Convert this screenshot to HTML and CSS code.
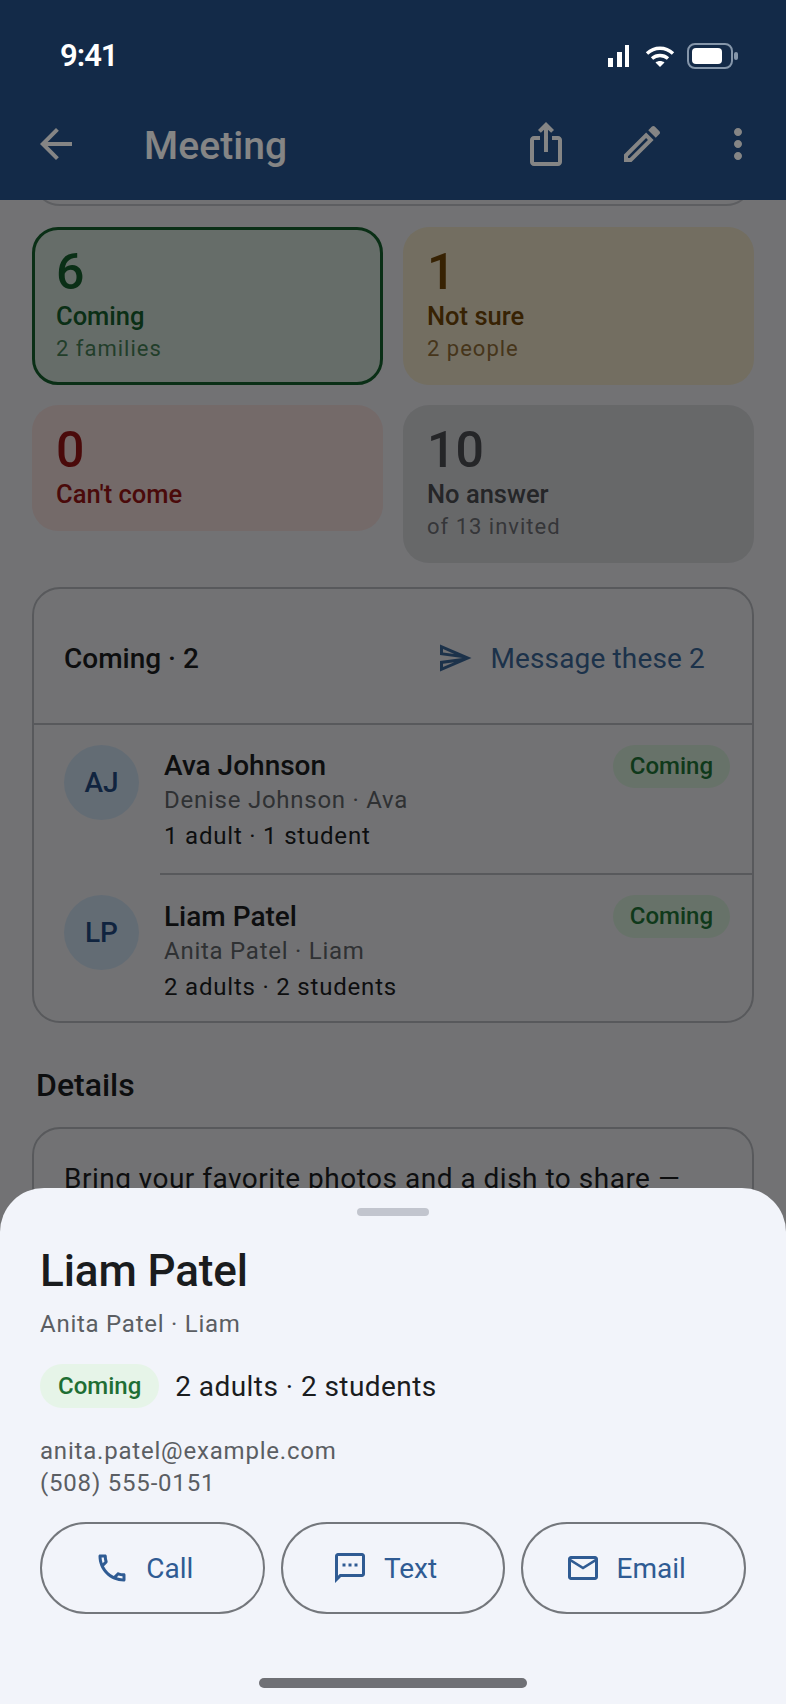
FILE: index.html
```html
<!DOCTYPE html>
<html lang="en">
<head>
  <meta charset="UTF-8">
  <title>Meeting</title>
  <link rel="stylesheet" href="styles.css">
</head>
<body>
  <div class="phone">
    <header class="top">
      <div class="status">
        <span class="time">9:41</span>
        <div class="status-icons">
          <svg class="signal" width="21" height="22" viewBox="0 0 21 22"><rect x="0" y="13" width="5" height="9" fill="#fff"/><rect x="9" y="7" width="5" height="15" fill="#fff"/><rect x="17" y="0" width="4" height="22" fill="#fff"/></svg>
          <svg width="30" height="22" viewBox="0 0 30 22" fill="none" stroke="#fff" stroke-width="3.4"><path d="M2 8.500C9.500 1.500 20.500 1.500 28 8.500"/><path d="M7 13.500C11.500 9.500 18.500 9.500 23 13.500"/><path d="M15 22l-4.500-4.500c2.500-2 6.500-2 9 0z" fill="#fff" stroke="none"/></svg>
          <svg width="51" height="26" viewBox="0 0 51 26"><rect x="1" y="1" width="44" height="24" rx="7" fill="none" stroke="#8596aa" stroke-width="2"/><rect x="5" y="5" width="30" height="16" rx="4" fill="#fff"/><rect x="47" y="9" width="4" height="8" rx="2" fill="#8596aa"/></svg>
        </div>
      </div>
      <div class="appbar">
        <svg class="icon back" viewBox="0 0 24 24"><path d="M20 11H7.830l5.590-5.590L12 4l-8 8 8 8 1.410-1.410L7.830 13H20v-2z"/></svg>
        <h1 class="title">Meeting</h1>
        <button class="action"><svg class="icon" viewBox="0 0 24 24"><path d="M16 5l-1.420 1.420-1.590-1.590V16h-1.980V4.830L9.420 6.420 8 5l4-4 4 4zm4 5v11c0 1.100-.9 2-2 2H6c-1.110 0-2-.9-2-2V10c0-1.110.89-2 2-2h3v2H6v11h12V10h-3V8h3c1.100 0 2 .89 2 2z"/></svg></button>
        <button class="action"><svg class="icon" viewBox="0 0 24 24"><path d="M14.060 9.020l.92.92L5.920 19H5v-.92l9.060-9.060M17.660 3c-.25 0-.51.1-.7.29l-1.830 1.830 3.750 3.750 1.830-1.830c.39-.39.39-1.020 0-1.410l-2.340-2.340c-.2-.2-.45-.29-.71-.29zm-3.600 3.190L3 17.250V21h3.750L17.810 9.940l-3.750-3.750z"/></svg></button>
        <button class="action"><svg class="icon" viewBox="0 0 24 24"><path d="M12 8c1.100 0 2-.9 2-2s-.9-2-2-2-2 .9-2 2 .9 2 2 2zm0 2c-1.100 0-2 .9-2 2s.9 2 2 2 2-.9 2-2-.9-2-2-2zm0 6c-1.100 0-2 .9-2 2s.9 2 2 2 2-.9 2-2-.9-2-2-2z"/></svg></button>
      </div>
    </header>

    <main class="content">
      <div class="prev-clip"><div class="prev-card"></div></div>

      <div class="tiles">
        <div class="tile tile-green selected">
          <div class="num">6</div>
          <div class="label">Coming</div>
          <div class="note">2 families</div>
        </div>
        <div class="tile tile-amber">
          <div class="num">1</div>
          <div class="label">Not sure</div>
          <div class="note">2 people</div>
        </div>
        <div class="tile tile-red">
          <div class="num">0</div>
          <div class="label">Can't come</div>
        </div>
        <div class="tile tile-grey">
          <div class="num">10</div>
          <div class="label">No answer</div>
          <div class="note">of 13 invited</div>
        </div>
      </div>

      <section class="panel">
        <div class="panel-head">
          <span class="panel-title">Coming · 2</span>
          <span class="msg">
            <svg class="msg-icon" viewBox="0 0 24 24"><path d="M4.010 6.030l7.510 3.220-7.520-1 .01-2.220m7.500 8.720L4 17.970v-2.220l7.510-1M2.010 3L2 10l15 2-15 2 .01 7L23 12 2.010 3z"/></svg>
            Message these 2
          </span>
        </div>
        <div class="person">
          <div class="avatar">AJ</div>
          <div class="person-text">
            <div class="name">Ava Johnson</div>
            <div class="sub">Denise Johnson · Ava</div>
            <div class="count">1 adult · 1 student</div>
          </div>
          <span class="chip">Coming</span>
        </div>
        <div class="person person-next">
          <div class="avatar">LP</div>
          <div class="person-text">
            <div class="name">Liam Patel</div>
            <div class="sub">Anita Patel · Liam</div>
            <div class="count">2 adults · 2 students</div>
          </div>
          <span class="chip">Coming</span>
        </div>
      </section>

      <h2 class="section-title">Details</h2>
      <section class="panel details">
        <p>Bring your favorite photos and a dish to share —</p>
      </section>
    </main>

    <div class="scrim"></div>

    <aside class="sheet">
      <div class="handle"></div>
      <h2 class="sheet-name">Liam Patel</h2>
      <div class="sheet-sub">Anita Patel · Liam</div>
      <div class="sheet-status">
        <span class="sheet-chip">Coming</span>
        <span class="sheet-count">2 adults · 2 students</span>
      </div>
      <div class="contact">
        <div>anita.patel@example.com</div>
        <div>(508) 555-0151</div>
      </div>
      <div class="buttons">
        <button class="pill"><svg viewBox="0 0 24 24"><path d="M6.540 5c.06.89.21 1.760.45 2.590l-1.200 1.200c-.41-1.200-.67-2.470-.76-3.790h1.510m9.860 12.020c.85.24 1.720.39 2.600.45v1.490c-1.320-.09-2.590-.35-3.800-.75l1.200-1.190M7.500 3H4c-.55 0-1 .45-1 1 0 9.390 7.610 17 17 17 .55 0 1-.45 1-1v-3.490c0-.55-.45-1-1-1-1.240 0-2.450-.2-3.570-.57-.1-.04-.21-.05-.31-.05-.26 0-.51.1-.71.29l-2.200 2.200c-2.830-1.450-5.150-3.760-6.590-6.590l2.200-2.200c.28-.28.36-.67.25-1.020C8.700 6.450 8.500 5.250 8.500 4c0-.55-.45-1-1-1z"/></svg>Call</button>
        <button class="pill"><svg viewBox="0 0 24 24"><path d="M20 2H4c-1.100 0-1.990.9-1.990 2L2 22l4-4h14c1.100 0 2-.9 2-2V4c0-1.100-.9-2-2-2zm0 14H5.170L4 17.170V4h16v12zM7 9h2v2H7zm4 0h2v2h-2zm4 0h2v2h-2z"/></svg>Text</button>
        <button class="pill"><svg viewBox="0 0 24 24"><path d="M20 4H4c-1.100 0-1.990.9-1.990 2L2 18c0 1.100.9 2 2 2h16c1.100 0 2-.9 2-2V6c0-1.100-.9-2-2-2zm0 14H4V8l8 5 8-5v10zm-8-7L4 6h16l-8 5z"/></svg>Email</button>
      </div>
      <div class="home-bar"></div>
    </aside>
  </div>
</body>
</html>
```

FILE: styles.css
```css
* {
  box-sizing: border-box;
}
body {
  margin: 0;
  font-family: Roboto, sans-serif;
  color: #1a1c1e;
}
h1, h2, p {
  margin: 0;
  font-weight: 500;
}
button {
  font-family: inherit;
  background: none;
  border: none;
  padding: 0;
}

.phone {
  position: relative;
  width: 786px;
  height: 1704px;
  overflow: hidden;
  background: #dadbdf;
}

/* top bar */
.top {
  height: 200px;
  background: #26528a;
}
.status {
  position: relative;
  z-index: 2;
  height: 110px;
  padding: 37px 48px 0 60px;
  display: flex;
  justify-content: space-between;
  align-items: flex-start;
}
.time {
  color: #fff;
  font-size: 31px;
  font-weight: 600;
  letter-spacing: -1px;
  line-height: 38px;
}
.status-icons {
  display: flex;
  align-items: center;
  gap: 12px;
  height: 38px;
}
.signal {
  margin-right: 4px;
}
.appbar {
  display: flex;
  align-items: center;
  height: 68px;
  padding: 0 0 0 32px;
}
.icon {
  width: 48px;
  height: 48px;
  fill: #fff;
  display: block;
}
.title {
  flex: 1;
  margin-left: 64px;
  padding-top: 4px;
  color: #fff;
  font-size: 39px;
  letter-spacing: 0.1px;
}
.action {
  width: 96px;
  height: 48px;
  display: flex;
  justify-content: center;
}

/* page under the sheet */
.content {
  padding: 0 32px;
}
.prev-clip {
  height: 6px;
  margin-bottom: 21px;
  overflow: hidden;
}
.prev-card {
  height: 60px;
  margin-top: -54px;
  border: 2px solid #b3b5ba;
  border-radius: 28px;
}
.tiles {
  display: grid;
  grid-template-columns: 1fr 1fr;
  gap: 20px;
  align-items: start;
}
.tile {
  padding: 20px 24px 20px;
  border-radius: 26px;
}
.tile-green {
  background: #c4d1c9;
  color: #155a2b;
}
.selected {
  border: 3px solid #155a2b;
  padding: 17px 21px 17px;
}
.tile-amber {
  background: #dcd3ba;
  color: #6a4206;
}
.tile-red {
  background: #dfcbca;
  color: #8f1414;
}
.tile-grey {
  background: #c6c7ca;
  color: #48494e;
}
.num {
  font-size: 50px;
  font-weight: 500;
  line-height: 50px;
}
.label {
  margin-top: 2px;
  font-size: 25.5px;
  font-weight: 500;
  line-height: 34px;
}
.note {
  font-size: 22px;
  letter-spacing: 1px;
  line-height: 32px;
  opacity: 0.75;
}

.panel {
  border: 2px solid #a9abb0;
  border-radius: 28px;
}
.tiles + .panel {
  margin-top: 24px;
  height: 436px;
}
.panel-head {
  height: 136px;
  padding: 4px 47px 0 30px;
  display: flex;
  align-items: center;
  justify-content: space-between;
  border-bottom: 2px solid #a9abb0;
}
.panel-title {
  font-size: 28px;
  font-weight: 500;
}
.msg {
  display: flex;
  align-items: center;
  gap: 17px;
  color: #37608f;
  font-size: 28px;
  letter-spacing: 0.15px;
}
.msg-icon {
  width: 36px;
  height: 36px;
  fill: #37608f;
}
.person {
  display: flex;
  height: 149px;
  padding: 20px 22px 0 30px;
  position: relative;
}
.person-next {
  height: 147px;
  padding-top: 21px;
}
.person-next::before {
  content: "";
  position: absolute;
  left: 126px;
  right: 0;
  top: -1px;
  border-top: 2px solid #a9abb0;
}
.avatar {
  width: 75px;
  height: 75px;
  border-radius: 50%;
  background: #bfcfdf;
  color: #1f4679;
  font-size: 28px;
  font-weight: 500;
  display: flex;
  align-items: center;
  justify-content: center;
}
.person-text {
  flex: 1;
  margin-left: 25px;
  padding-top: 3px;
}
.person-next .person-text {
  padding-top: 4px;
}
.name {
  font-size: 28px;
  font-weight: 500;
  line-height: 35px;
}
.sub {
  font-size: 24px;
  letter-spacing: 0.75px;
  line-height: 35px;
  color: #5b5e63;
}
.count {
  font-size: 24px;
  letter-spacing: 0.8px;
  line-height: 36px;
}
.chip {
  height: 43px;
  padding: 0 17px;
  border-radius: 22px;
  background: #c6dac9;
  color: #1e6e34;
  font-size: 24px;
  font-weight: 500;
  line-height: 43px;
}
.section-title {
  margin: 43px 0 23px 4px;
  font-size: 32px;
  line-height: 38px;
}
.details {
  padding: 33px 30px;
}
.details p {
  font-size: 28px;
  font-weight: 400;
  letter-spacing: 0.5px;
}

.scrim {
  position: absolute;
  inset: 0;
  background: rgba(0, 0, 0, 0.48);
}

/* bottom sheet */
.sheet {
  position: absolute;
  left: 0;
  right: 0;
  bottom: 0;
  height: 516px;
  padding: 20px 40px 0;
  background: #f2f4fa;
  border-radius: 44px 44px 0 0;
}
.handle {
  width: 72px;
  height: 8px;
  margin: 0 auto;
  border-radius: 4px;
  background: #c2c5ce;
}
.sheet-name {
  margin-top: 27px;
  font-size: 44px;
  letter-spacing: -0.1px;
  line-height: 56px;
}
.sheet-sub {
  margin-top: 8px;
  font-size: 24px;
  letter-spacing: 0.75px;
  line-height: 34px;
  color: #5b5e63;
}
.sheet-status {
  display: flex;
  align-items: center;
  gap: 16px;
  margin-top: 23px;
}
.sheet-chip {
  height: 44px;
  padding: 0 18px;
  border-radius: 22px;
  background: #e6f4e8;
  color: #1e6e34;
  font-size: 24px;
  font-weight: 500;
  line-height: 44px;
}
.sheet-count {
  font-size: 28px;
  letter-spacing: 0.44px;
}
.contact {
  margin-top: 27px;
  font-size: 24px;
  letter-spacing: 0.8px;
  line-height: 32px;
  color: #5b5e63;
}
.buttons {
  display: flex;
  gap: 16px;
  margin-top: 23px;
  width: 706px;
}
.pill {
  flex: 1;
  height: 92px;
  padding-right: 17px;
  border: 2px solid #74777c;
  border-radius: 46px;
  display: flex;
  align-items: center;
  justify-content: center;
  gap: 16px;
  color: #2f5b93;
  font-size: 28px;
}
.pill svg {
  width: 36px;
  height: 36px;
  fill: #2f5b93;
}
.home-bar {
  position: absolute;
  left: 259px;
  bottom: 16px;
  width: 268px;
  height: 10px;
  border-radius: 5px;
  background: #6f7075;
}
```
